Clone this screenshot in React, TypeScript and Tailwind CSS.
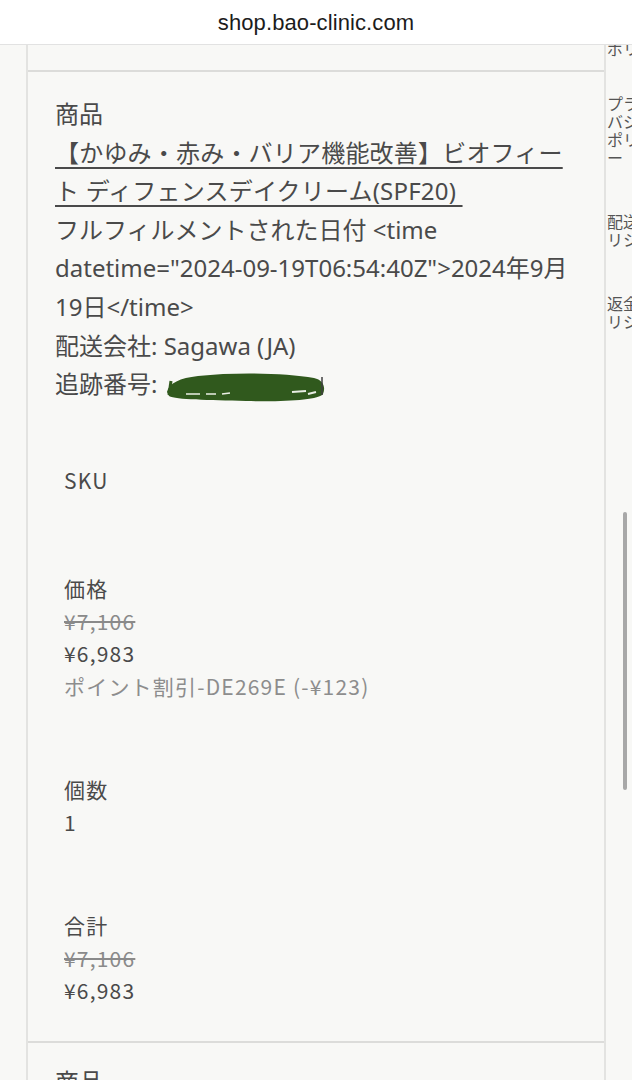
import React from "react";

/* order line rows, as rendered on a narrow screen */

const sideLinks: string[][] = [
  ["プライ", "バシー", "ポリシ", "ー"],
  ["配送ポ", "リシー"],
  ["返金ポ", "リシー"],
];

function Redacted() {
  return (
    <svg width="162" height="32" viewBox="0 0 162 32" className="inline-block align-[-10px]">
      <path
        d="M3 21 C5 12 16 7 34 5 C72 1 122 2 150 7 C159 9 162 16 159 23 C155 29 120 31 82 30 C44 29 12 29 5 25 Z"
        fill="#30591d"
      />
      <path d="M5 24 L7 10" stroke="#30591d" strokeWidth="3" />
      <path d="M22 23 L36 23 M42 23 L52 23 M58 23 L66 22" stroke="#e9eee4" strokeWidth="1.6" />
      <path d="M128 21 L142 20 M144 23 L152 21" stroke="#e9eee4" strokeWidth="2" />
      <path d="M158 6 L158 24" stroke="#3f3f3f" strokeWidth="1.5" />
    </svg>
  );
}

function Cell({ label, children, className }: { label: string; children?: React.ReactNode; className: string }) {
  return (
    <div className={`pl-[9px] font-['Noto_Sans_CJK_JP',sans-serif] text-[21px] leading-[32.5px] tracking-[1.2px] text-[#4a4a4a] ${className}`}>
      <div>{label}</div>
      {children}
    </div>
  );
}

export default function App() {
  return (
    <div className="h-[1080px] overflow-hidden bg-[#f8f8f6] relative">
      {/* BROWSER BAR */}
      <div className="h-[45px] bg-white border-b border-[#e2e2e2] flex items-center justify-center">
        <span className="font-['Liberation_Sans',sans-serif] text-[22px] text-[#1c1c1c] tracking-[0.1px]">
          shop.bao-clinic.com
        </span>
      </div>

      <div className="flex">
        {/* LEFT GUTTER */}
        <div className="w-[28px] shrink-0 border-r-2 border-[#e3e3e1]" />

        {/* ORDER TABLE */}
        <div className="w-[578px] shrink-0 border-r-2 border-[#e3e3e1]">
          <div className="h-[27px] border-b-2 border-[#dcdcda]" />

          <div className="pl-[27px] pr-[28px] border-b-2 border-[#dcdcda]">
            <div className="pt-[23px] pb-[24px] font-['Noto_Sans','Noto_Sans_CJK_JP',sans-serif] text-[24px] leading-[38.6px] text-[#4a4a4a] whitespace-nowrap">
              <div>商品</div>
              <div>
                <a className="underline decoration-[1.5px] underline-offset-[5px] tracking-[0.2px]">
                  【かゆみ・赤み・バリア機能改善】ビオフィー
                  <br />
                  ト ディフェンスデイクリーム(SPF20)&nbsp;
                </a>
              </div>
              <div>フルフィルメントされた日付 &lt;time</div>
              <div>datetime="2024-09-19T06:54:40Z"&gt;2024年9月</div>
              <div>19日&lt;/time&gt;</div>
              <div>配送会社: Sagawa (JA)</div>
              <div>
                追跡番号: <Redacted />
              </div>
            </div>

            <Cell label="SKU" className="pt-[36px] pb-[40px]" />

            <Cell label="価格" className="pt-[36px] pb-[35px]">
              <div className="line-through text-[#8a8a8a]">¥7,106</div>
              <div>¥6,983</div>
              <div className="text-[#8d8d8d]">ポイント割引-DE269E (-¥123)</div>
            </Cell>

            <Cell label="個数" className="pt-[36px] pb-[35px]">
              <div>1</div>
            </Cell>

            <Cell label="合計" className="pt-[36px] pb-[34px]">
              <div className="line-through text-[#8a8a8a]">¥7,106</div>
              <div>¥6,983</div>
            </Cell>
          </div>

          <div className="pl-[27px] pt-[20px] font-['Noto_Sans','Noto_Sans_CJK_JP',sans-serif] text-[24px] leading-[38.6px] text-[#4a4a4a]">
            商品
          </div>
        </div>

        {/* SIDE COLUMN, cut off by the viewport */}
        <div className="w-[26px] shrink-0 overflow-hidden">
          <div className="w-[60px] pl-[1px] font-['Noto_Sans_CJK_JP',sans-serif] text-[16px] leading-[18px] text-[#555555] whitespace-nowrap">
            <div className="-mt-[6px]">ポリシ</div>
            {sideLinks.map((lines, i) => (
              <div key={i} className={i === 0 ? "mt-[37px]" : "mt-[46px]"}>
                {lines.map((l, j) => (
                  <div key={j}>{l}</div>
                ))}
              </div>
            ))}
          </div>
        </div>
      </div>

      {/* overlay scrollbar */}
      <div className="absolute left-[623px] top-[512px] w-[4px] h-[278px] rounded-full bg-[#a8a8a8]" />
    </div>
  );
}
